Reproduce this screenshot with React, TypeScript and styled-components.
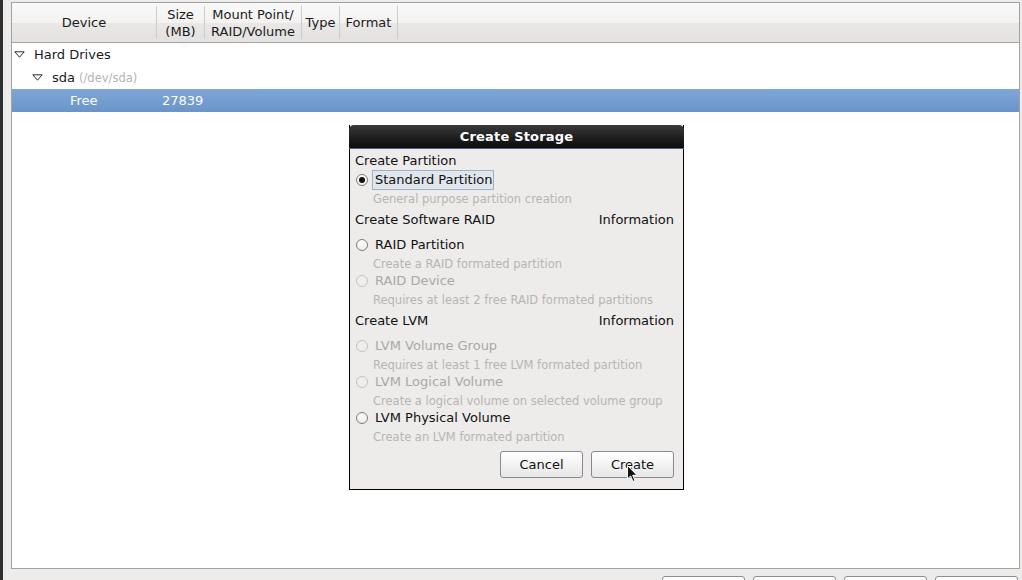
import { styled, createGlobalStyle } from "styled-components";

const GlobalStyle = createGlobalStyle`
  html, body {
    margin: 0;
    padding: 0;
    background: #edeceb;
    font-family: "DejaVu Sans", "Liberation Sans", sans-serif;
    font-size: 13px;
    color: #101010;
  }
`;

const Screen = styled.div`
  position: relative;
  display: flex;
  width: 1022px;
  height: 580px;
  overflow: hidden;
  background: #edeceb;
`;

const LeftStrip = styled.div`
  width: 3px;
  background: #2e2f30;
`;

const Main = styled.div`
  flex: 1;
  display: flex;
  flex-direction: column;
  padding: 2px 2px 0 8px;
`;

const TreeFrame = styled.div`
  flex-shrink: 0;
  height: 567px;
  box-sizing: border-box;
  border: 1px solid #a3a2a0;
  background: #fff;
  display: flex;
  flex-direction: column;
`;

const HeaderRow = styled.div`
  display: flex;
  height: 40px;
  box-sizing: border-box;
  padding: 3px 0;
  border-bottom: 1px solid #a3a3a3;
  background: linear-gradient(#f9f9f9, #f3f2f1 50%, #e9e8e6 51%, #e3e2e0);
`;

const HeaderCell = styled.div<{ $w: number }>`
  width: ${(p) => p.$w}px;
  box-sizing: border-box;
  border-right: 1px solid #cdccca;
  display: flex;
  align-items: center;
  justify-content: center;
  text-align: center;
  line-height: 17px;
  color: #1a1a1a;
`;

const TreeRow = styled.div<{ $selected?: boolean }>`
  display: flex;
  align-items: center;
  height: 23px;
  color: ${(p) => (p.$selected ? "#fff" : "#1a1a1a")};
  background: ${(p) =>
    p.$selected ? "linear-gradient(#7ea6d8, #6a94c8)" : "transparent"};
`;

const DeviceCell = styled.div<{ $indent: number }>`
  width: 150px;
  box-sizing: border-box;
  padding-left: ${(p) => p.$indent}px;
  display: flex;
  align-items: center;
`;

const Expander = styled.svg`
  width: 11px;
  height: 7px;
  margin-right: 9px;
`;

const DevPath = styled.span`
  margin-left: 4px;
  font-size: 11.5px;
  color: #b3b3b3;
`;

const SizeCell = styled.div`
  padding-left: 0;
`;

const BottomBar = styled.div`
  display: flex;
  justify-content: flex-end;
  gap: 8px;
  padding: 7px 2px 0 0;
`;

const BarButton = styled.div`
  width: 83px;
  height: 27px;
  box-sizing: border-box;
  border: 1px solid #8e8e8e;
  border-radius: 3px;
  background: linear-gradient(#fdfdfd, #ebebeb);
`;

const Dialog = styled.div`
  position: absolute;
  left: 349px;
  top: 125px;
  width: 335px;
  height: 365px;
  box-sizing: border-box;
  border: 1px solid #000;
  border-top: none;
  background: #edeceb;
  display: flex;
  flex-direction: column;
`;

const TitleBar = styled.div`
  height: 23px;
  margin: 0 -1px;
  border-radius: 5px 5px 0 0;
  background: linear-gradient(#3a3a3a, #1c1c1c 60%, #0d0d0d);
  border-bottom: 1px solid #4a6285;
  color: #fff;
  font-weight: bold;
  display: flex;
  align-items: center;
  justify-content: center;
  letter-spacing: 0.2px;
`;

const Body = styled.div`
  display: flex;
  flex-direction: column;
  padding: 0 9px 0 5px;
`;

const Section = styled.div<{ $top: number; $after: number }>`
  display: flex;
  justify-content: space-between;
  align-items: center;
  height: 19px;
  margin-top: ${(p) => p.$top}px;
  margin-bottom: ${(p) => p.$after}px;
`;

const OptionRow = styled.div`
  display: flex;
  align-items: center;
  height: 19px;
  padding-left: 1px;
`;

const Radio = styled.span<{ $checked?: boolean; $disabled?: boolean }>`
  width: 12px;
  height: 12px;
  box-sizing: border-box;
  border-radius: 50%;
  border: 1px solid ${(p) => (p.$disabled ? "#c4c3c1" : "#7b7b7b")};
  background: ${(p) =>
    p.$disabled ? "#efeeed" : "linear-gradient(#ffffff, #ececec)"};
  margin-right: 4px;
  display: flex;
  align-items: center;
  justify-content: center;
  &::after {
    content: "";
    display: ${(p) => (p.$checked ? "block" : "none")};
    width: 6px;
    height: 6px;
    border-radius: 50%;
    background: #111;
  }
`;

const OptionLabel = styled.span<{ $focused?: boolean; $disabled?: boolean }>`
  padding: 1px 1px 1px 2px;
  border: 1px solid ${(p) => (p.$focused ? "#9fb1c9" : "transparent")};
  background: ${(p) => (p.$focused ? "#e1e6ed" : "transparent")};
  color: ${(p) => (p.$disabled ? "#a9a8a6" : "#111")};
  line-height: 16px;
`;

const Desc = styled.div`
  height: 17px;
  box-sizing: border-box;
  padding: 2px 0 0 18px;
  line-height: 17px;
  font-size: 11.5px;
  color: #b6b5b3;
`;

const ButtonRow = styled.div`
  display: flex;
  justify-content: flex-end;
  gap: 8px;
  margin-top: 7px;
`;

const DialogButton = styled.div`
  width: 83px;
  height: 27px;
  box-sizing: border-box;
  border: 1px solid #8a8a8a;
  border-radius: 3px;
  background: linear-gradient(#ffffff, #f3f3f3 50%, #e6e6e6);
  display: flex;
  align-items: center;
  justify-content: center;
  color: #111;
`;

const Cursor = styled.svg`
  position: absolute;
  left: 627px;
  top: 465px;
  width: 12px;
  height: 18px;
`;

const ExpanderIcon = () => (
  <Expander viewBox="0 0 11 7">
    <polygon points="0.8,0.8 10.2,0.8 5.5,6.2" fill="none" stroke="#2a2a2a" strokeWidth="1" />
  </Expander>
);

type Option = {
  label: string;
  desc: string;
  checked?: boolean;
  disabled?: boolean;
  focused?: boolean;
};

const OptionItem = ({ o }: { o: Option }) => (
  <>
    <OptionRow>
      <Radio $checked={o.checked} $disabled={o.disabled} />
      <OptionLabel $focused={o.focused} $disabled={o.disabled}>
        {o.label}
      </OptionLabel>
    </OptionRow>
    <Desc>{o.desc}</Desc>
  </>
);

const groups: { title: string; info: boolean; top: number; after: number; options: Option[] }[] = [
  {
    title: "Create Partition",
    info: false,
    top: 2,
    after: 0,
    options: [
      { label: "Standard Partition", desc: "General purpose partition creation", checked: true, focused: true },
    ],
  },
  {
    title: "Create Software RAID",
    info: true,
    top: 4,
    after: 6,
    options: [
      { label: "RAID Partition", desc: "Create a RAID formated partition" },
      { label: "RAID Device", desc: "Requires at least 2 free RAID formated partitions", disabled: true },
    ],
  },
  {
    title: "Create LVM",
    info: true,
    top: 4,
    after: 6,
    options: [
      { label: "LVM Volume Group", desc: "Requires at least 1 free LVM formated partition", disabled: true },
      { label: "LVM Logical Volume", desc: "Create a logical volume on selected volume group", disabled: true },
      { label: "LVM Physical Volume", desc: "Create an LVM formated partition" },
    ],
  },
];

const columns = [
  { w: 145, label: ["Device"] },
  { w: 48, label: ["Size", "(MB)"] },
  { w: 97, label: ["Mount Point/", "RAID/Volume"] },
  { w: 38, label: ["Type"] },
  { w: 58, label: ["Format"] },
];

export default function App() {
  return (
    <>
      <GlobalStyle />
      <Screen>
        <LeftStrip />
        <Main>
          <TreeFrame>
            <HeaderRow>
              {columns.map((c) => (
                <HeaderCell key={c.label[0]} $w={c.w}>
                  <div>
                    {c.label.map((l) => (
                      <div key={l}>{l}</div>
                    ))}
                  </div>
                </HeaderCell>
              ))}
            </HeaderRow>
            <TreeRow>
              <DeviceCell $indent={2}>
                <ExpanderIcon />
                Hard Drives
              </DeviceCell>
            </TreeRow>
            <TreeRow>
              <DeviceCell $indent={20}>
                <ExpanderIcon />
                sda<DevPath>(/dev/sda)</DevPath>
              </DeviceCell>
            </TreeRow>
            <TreeRow $selected>
              <DeviceCell $indent={58}>Free</DeviceCell>
              <SizeCell>27839</SizeCell>
            </TreeRow>
          </TreeFrame>
          <BottomBar>
            <BarButton />
            <BarButton />
            <BarButton />
            <BarButton />
          </BottomBar>
        </Main>

        <Dialog>
          <TitleBar>Create Storage</TitleBar>
          <Body>
            {groups.map((g) => (
              <div key={g.title}>
                <Section $top={g.top} $after={g.after}>
                  <span>{g.title}</span>
                  {g.info && <span>Information</span>}
                </Section>
                {g.options.map((o) => (
                  <OptionItem key={o.label} o={o} />
                ))}
              </div>
            ))}
            <ButtonRow>
              <DialogButton>Cancel</DialogButton>
              <DialogButton>Create</DialogButton>
            </ButtonRow>
          </Body>
        </Dialog>

        <Cursor viewBox="0 0 12 18">
          <path
            d="M0.5 0.5 L0.5 14 L3.6 11 L6 16.5 L8 15.6 L5.7 10.3 L10 10.3 Z"
            fill="#111"
            stroke="#fff"
            strokeWidth="1"
          />
        </Cursor>
      </Screen>
    </>
  );
}
